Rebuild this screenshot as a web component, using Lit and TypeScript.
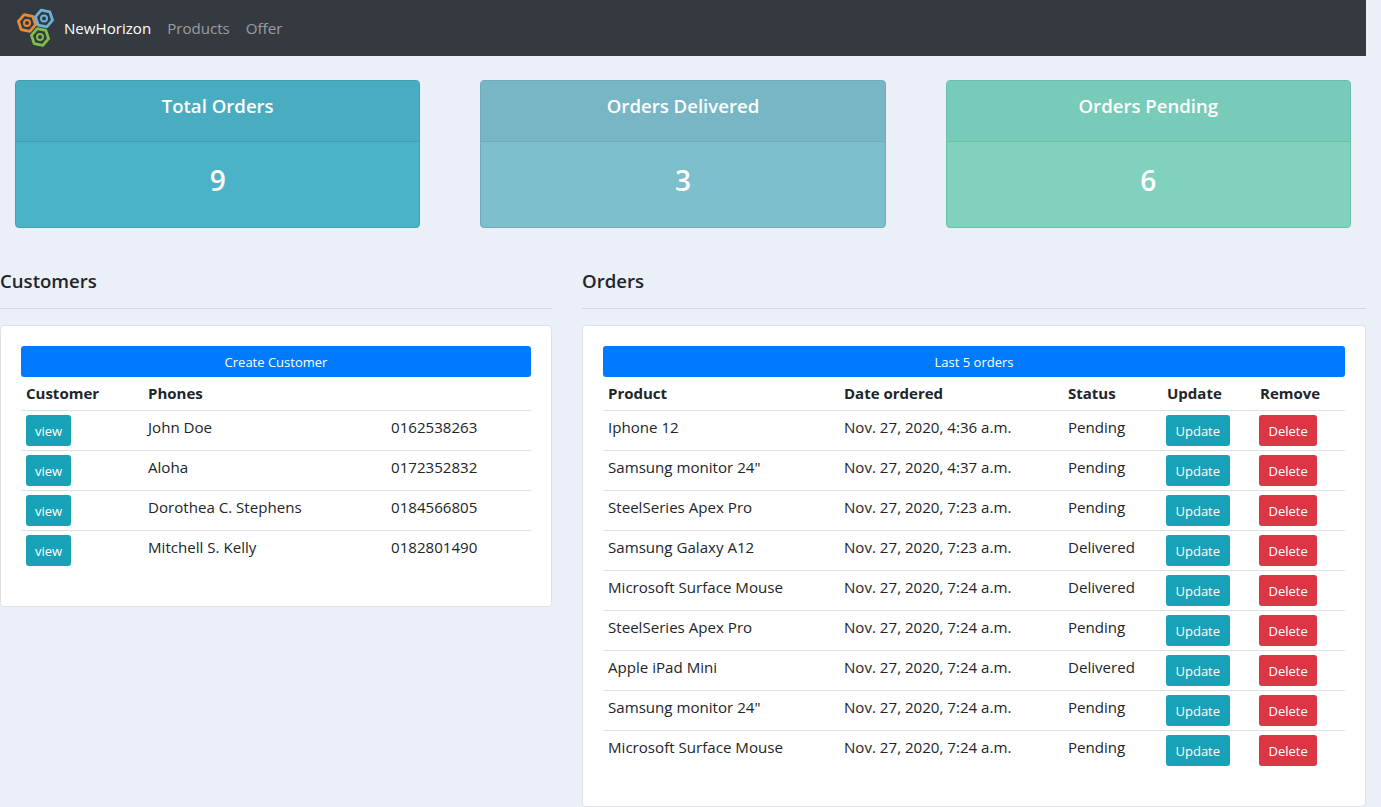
import { LitElement, html, css, svg } from "lit";
import { customElement } from "lit/decorators.js";

const customers = [
  ["John Doe", "0162538263"],
  ["Aloha", "0172352832"],
  ["Dorothea C. Stephens", "0184566805"],
  ["Mitchell S. Kelly", "0182801490"],
];
const D = "Nov. 27, 2020, ";
const orders = [
  ["Iphone 12", D + "4:36 a.m.", "Pending"],
  ['Samsung monitor 24"', D + "4:37 a.m.", "Pending"],
  ["SteelSeries Apex Pro", D + "7:23 a.m.", "Pending"],
  ["Samsung Galaxy A12", D + "7:23 a.m.", "Delivered"],
  ["Microsoft Surface Mouse", D + "7:24 a.m.", "Delivered"],
  ["SteelSeries Apex Pro", D + "7:24 a.m.", "Pending"],
  ["Apple iPad Mini", D + "7:24 a.m.", "Delivered"],
  ['Samsung monitor 24"', D + "7:24 a.m.", "Pending"],
  ["Microsoft Surface Mouse", D + "7:24 a.m.", "Pending"],
];

const hex = (cx: number, cy: number, c: string) => {
  const r = 8.8;
  const pts = [0, 1, 2, 3, 4, 5]
    .map((i) => {
      const a = (Math.PI / 3) * i + 0.2;
      return `${(cx + r * Math.cos(a)).toFixed(1)},${(cy + r * Math.sin(a)).toFixed(1)}`;
    })
    .join(" ");
  return svg`<polygon points=${pts} fill="none" stroke=${c} stroke-width="2.8" stroke-linejoin="round"/>
    <circle cx=${cx} cy=${cy} r="3" fill="none" stroke=${c} stroke-width="2"/>`;
};

@customElement("app-root")
export class AppRoot extends LitElement {
  static styles = css`
    :host {
      display: block;
      width: 1381px;
      height: 807px;
      overflow: hidden;
      background: #ebeff7;
      color: #212529;
      font-family: "Open Sans", "Noto Sans", sans-serif;
      font-size: 15.1px;
      line-height: 24px;
      box-sizing: border-box;
      padding-right: 15px;
    }
    .nav {
      height: 56px;
      background: #343a40;
      display: flex;
      align-items: center;
      padding-left: 16px;
    }
    .logo { width: 40px; height: 40px; margin-right: 8px; }
    .brand { color: #fff; margin-right: 16px; }
    .link { color: rgba(255, 255, 255, 0.5); margin-right: 16px; }
    .stats {
      display: grid;
      grid-template-columns: repeat(3, 1fr);
      gap: 60px;
      padding: 24px 15px 0;
    }
    .stat {
      height: 148px;
      box-sizing: border-box;
      border-radius: 4px;
      border: 1px solid;
      color: #fff;
      text-align: center;
      font-weight: 600;
      overflow: hidden;
    }
    .stat .head {
      height: 61px;
      box-sizing: border-box;
      border-bottom: 1px solid;
      border-color: inherit;
      font-size: 18.6px;
      line-height: 24px;
      padding-top: 13px;
    }
    .stat .num { font-size: 28px; line-height: 34px; padding-top: 21px; }
    .info { background: #4cb2c7; border-color: #429fb2; }
    .info .head { background: #49acc1; }
    .blue { background: #7dbfcc; border-color: #6fabb9; }
    .blue .head { background: #78b6c6; }
    .teal { background: #80d2bf; border-color: #6cbfab; }
    .teal .head { background: #78cbb9; }
    .cols {
      display: grid;
      grid-template-columns: 552px 784px;
      gap: 30px;
      padding-top: 40px;
      align-items: start;
    }
    h5 {
      margin: 0;
      font-size: 18.6px;
      font-weight: 600;
      line-height: 26px;
      height: 40px;
      border-bottom: 1px solid #d5d8de;
      box-sizing: content-box;
    }
    .card {
      margin-top: 16px;
      background: #fff;
      border: 1px solid #dfe1e6;
      border-radius: 4px;
      padding: 20px 20px 36px;
    }
    .bar {
      height: 31px;
      line-height: 32px;
      background: #007bff;
      color: #fff;
      text-align: center;
      font-size: 13px;
      border-radius: 3px;
    }
    .row { display: grid; height: 40px; box-sizing: border-box; border-top: 1px solid #dee2e6; }
    .row.th { height: 33px; border-top: 0; font-weight: 700; font-size: 15px; align-items: end; padding-bottom: 5px; }
    .c { grid-template-columns: 122px 243px 145px; }
    .o { grid-template-columns: 236px 224px 98px 93px 91px; }
    .row > div { padding: 4px 5px 0; white-space: nowrap; }
    .row.th > div { padding: 0 5px; }
    .row.th > .shift { padding-left: 6px; }
    .btn {
      display: inline-block;
      height: 31px;
      line-height: 32px;
      padding: 0 9.5px;
      border-radius: 3px;
      color: #fff;
      font-size: 13px;
      background: #17a2b8;
    }
    .btn.view { padding: 0 9px; }
    .btn.del { background: #dc3545; }
  `;

  render() {
    return html`
      <div class="nav">
        <svg class="logo" viewBox="16 8 40 40">
          ${hex(27, 23, "#e98a35")}${hex(44, 18.5, "#6bb3d6")}${hex(40, 37, "#7cc04b")}
        </svg>
        <span class="brand">NewHorizon</span>
        <span class="link">Products</span>
        <span class="link">Offer</span>
      </div>
      <div class="stats">
        <div class="stat info"><div class="head">Total Orders</div><div class="num">9</div></div>
        <div class="stat blue"><div class="head">Orders Delivered</div><div class="num">3</div></div>
        <div class="stat teal"><div class="head">Orders Pending</div><div class="num">6</div></div>
      </div>
      <div class="cols">
        <section>
          <h5>Customers</h5>
          <div class="card">
            <div class="bar">Create Customer</div>
            <div class="row th c"><div>Customer</div><div>Phones</div><div></div></div>
            ${customers.map(
              ([n, p]) => html`<div class="row c">
                <div><span class="btn view">view</span></div>
                <div>${n}</div>
                <div>${p}</div>
              </div>`
            )}
          </div>
        </section>
        <section>
          <h5>Orders</h5>
          <div class="card">
            <div class="bar">Last 5 orders</div>
            <div class="row th o">
              <div>Product</div><div>Date ordered</div><div>Status</div><div class="shift">Update</div><div class="shift">Remove</div>
            </div>
            ${orders.map(
              ([a, b, s]) => html`<div class="row o">
                <div>${a}</div>
                <div>${b}</div>
                <div>${s}</div>
                <div><span class="btn">Update</span></div>
                <div><span class="btn del">Delete</span></div>
              </div>`
            )}
          </div>
        </section>
      </div>
    `;
  }
}
